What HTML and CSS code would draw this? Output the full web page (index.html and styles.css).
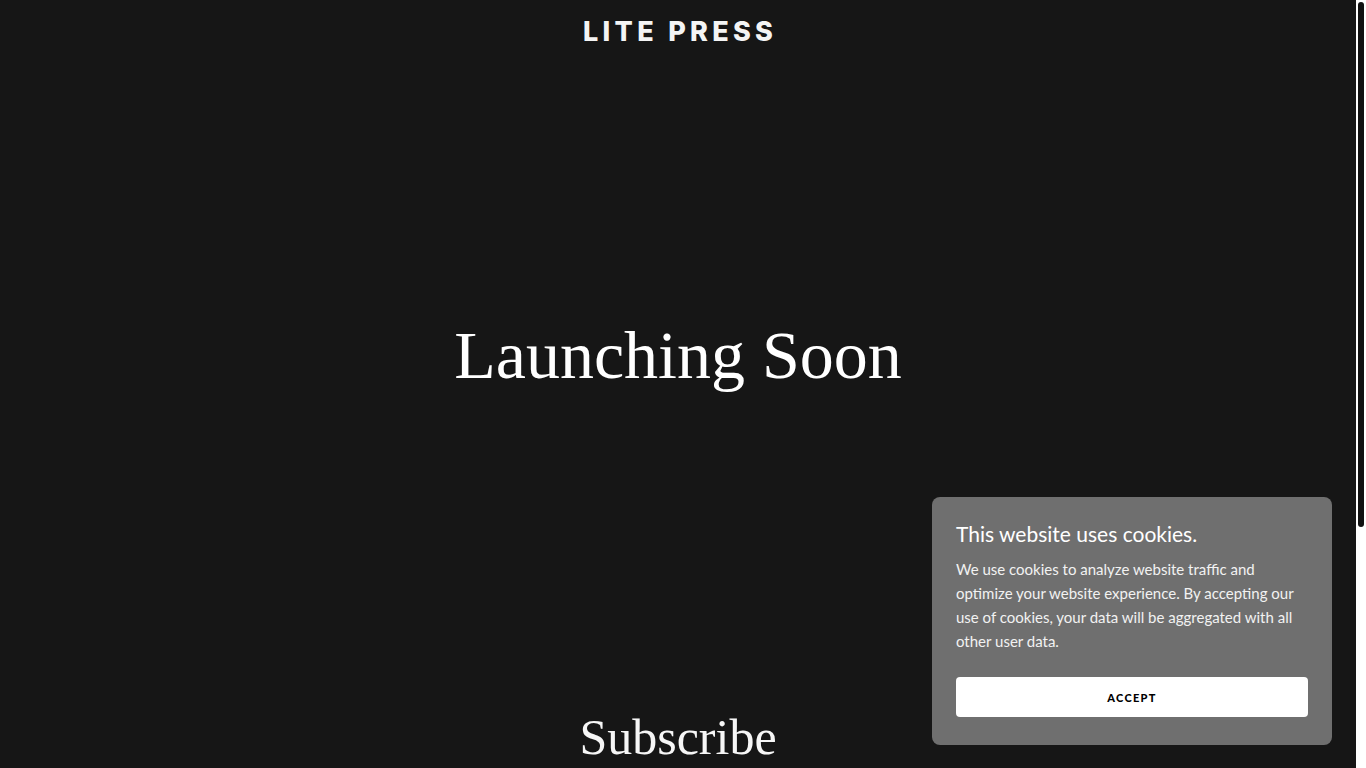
FILE: index.html
```html
<!DOCTYPE html>
<html lang="en">
<head>
<meta charset="utf-8">
<title>Lite Press</title>
<link rel="stylesheet" href="styles.css">
</head>
<body>
<header class="site-header">
  <div class="logo">LITE PRESS</div>
</header>
<main>
  <section class="hero">
    <h1 class="hero-title">Launching Soon</h1>
  </section>
  <section class="subscribe">
    <h2 class="subscribe-title">Subscribe</h2>
  </section>
</main>
<div class="cookie">
  <h3 class="cookie-title">This website uses cookies.</h3>
  <p class="cookie-text">We use cookies to analyze website traffic and optimize your website experience. By accepting our use of cookies, your data will be aggregated with all other user data.</p>
  <button class="cookie-btn">ACCEPT</button>
</div>
<div class="scrollbar"><div class="scrollbar-thumb"></div></div>
</body>
</html>
```
FILE: styles.css
```css
html {
  background: #161616;
}
body {
  margin: 0 10px 0 0;
  background: #161616;
  color: #ffffff;
  font-family: "Lato", sans-serif;
}
.site-header {
  height: 62px;
  display: flex;
  align-items: center;
  justify-content: center;
}
.logo {
  font-family: "Inter", "DejaVu Sans", sans-serif;
  font-weight: 800;
  font-size: 27px;
  letter-spacing: 4.3px;
  margin-right: -4.3px;
  color: #f4f4f4;
}
.hero {
  height: 586px;
  display: flex;
  align-items: center;
  justify-content: center;
}
.hero-title {
  margin: 0;
  font-family: "Liberation Serif", serif;
  font-weight: 400;
  font-size: 68px;
  line-height: 1;
  color: #ffffff;
}
.subscribe {
  padding-top: 64px;
  height: 420px;
  text-align: center;
}
.subscribe-title {
  margin: 0;
  font-family: "Liberation Serif", serif;
  font-weight: 400;
  font-size: 50px;
  line-height: 1;
  color: #f6f6f6;
}
.cookie {
  position: fixed;
  right: 34px;
  bottom: 23px;
  width: 352px;
  padding: 24px 24px 28px;
  background: #6f6f6f;
  border-radius: 8px;
}
.cookie-title {
  margin: 0 0 10px;
  font-family: "Lato", sans-serif;
  font-weight: 400;
  font-size: 21px;
  line-height: 26px;
  color: #ffffff;
}
.cookie-text {
  margin: 0 0 24px;
  font-size: 15px;
  line-height: 24px;
  color: #f2f2f2;
}
.cookie-btn {
  display: block;
  width: 100%;
  height: 40px;
  border: 0;
  border-radius: 4px;
  background: #ffffff;
  color: #000000;
  font-family: "Lato", sans-serif;
  font-weight: 900;
  font-size: 11px;
  letter-spacing: 1.3px;
  cursor: pointer;
}
.scrollbar {
  position: fixed;
  top: 0;
  right: 0;
  width: 10px;
  height: 100%;
  background: #ffffff;
}
.scrollbar-thumb {
  margin: 2px 0 0 2px;
  width: 6px;
  height: 525px;
  border-radius: 3px;
  background: #111111;
}
```
